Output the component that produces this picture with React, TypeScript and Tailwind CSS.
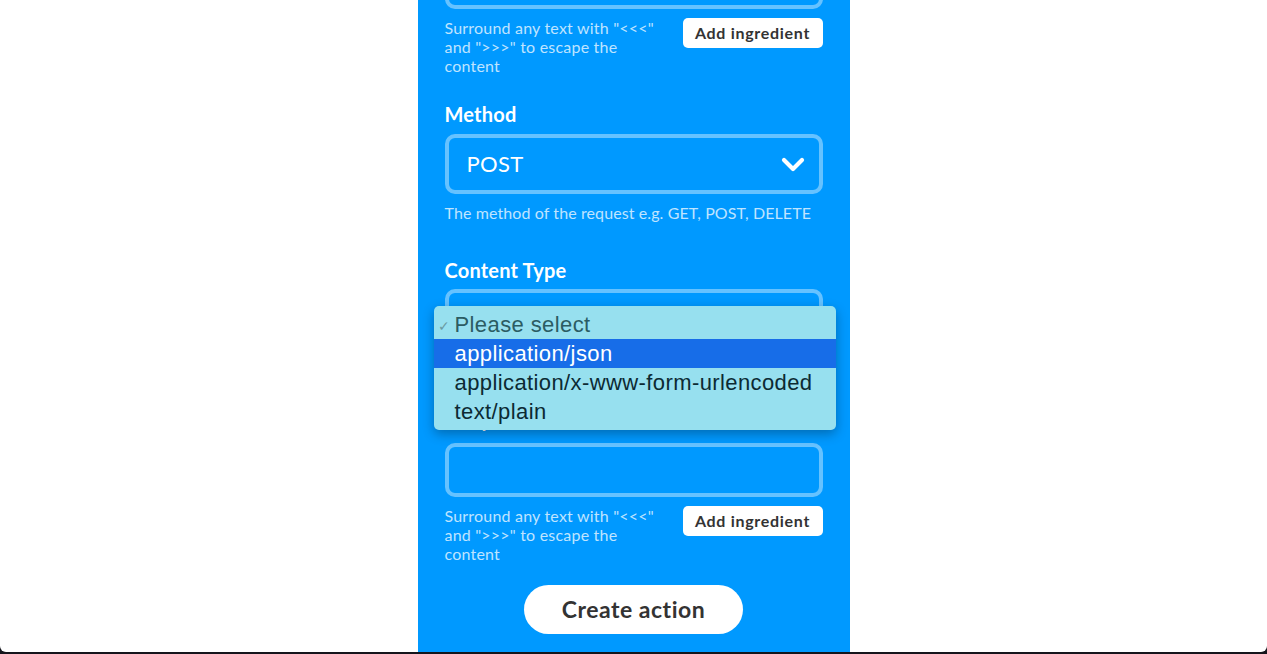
import React from "react";

const font = { fontFamily: "Lato, 'Open Sans', sans-serif" };

function HelperRow() {
  return (
    <div className="mt-[9px] flex items-start justify-between">
      <p className="w-[222px] text-[16px] leading-[19px] tracking-[0.2px] text-white/75">
        Surround any text with "&lt;&lt;&lt;" and "&gt;&gt;&gt;" to escape the content
      </p>
      <button className="h-[30px] w-[140px] rounded-[5px] bg-white text-[16px] font-bold tracking-[0.7px] text-[#333]">
        Add ingredient
      </button>
    </div>
  );
}

function Chevron() {
  return (
    <svg width="24" height="15" viewBox="0 0 24 15" className="shrink-0">
      <polyline points="3,3 12,12 21,3" fill="none" stroke="white" strokeWidth="4.2" strokeLinecap="round" strokeLinejoin="round" />
    </svg>
  );
}

export default function App() {
  return (
    <div className="h-[654px] w-full overflow-hidden bg-[#15151c]" style={font}>
      <div className="flex h-[652px] justify-center overflow-hidden rounded-b-[6px] bg-white">
        <div className="flex w-[432px] flex-col bg-[#0099ff] px-[27px]">
          <div className="-mt-[45px] h-[54px] shrink-0 rounded-[10px] border-4 border-white/40" />
          <HelperRow />

          <label className="mt-[25px] text-[20px] font-bold leading-[28px] tracking-[0.2px] text-white">Method</label>
          <div className="mt-[6px] flex h-[60px] items-center justify-between rounded-[10px] border-4 border-white/40 pl-[18px] pr-[14px]">
            <span className="text-[22px] leading-none tracking-[0.3px] text-white">POST</span>
            <Chevron />
          </div>
          <p className="mt-[9px] text-[16px] leading-[19px] tracking-[0.1px] text-white/75">
            The method of the request e.g. GET, POST, DELETE
          </p>

          <label className="mt-[34px] text-[20px] font-bold leading-[28px] tracking-[0.2px] text-white">Content Type</label>
          <div className="relative mt-[5px]">
            <div className="h-[60px] rounded-[10px] border-4 border-white/40" />
            <div
              className="absolute left-[-11px] top-[17px] z-10 w-[402px] rounded-[5px] bg-[#97e0ef] py-[4px] shadow-[0_4px_12px_rgba(0,0,0,0.3)]"
              style={{ fontFamily: "'Liberation Sans', Arial, sans-serif" }}
            >
              <div className="relative flex h-[29px] items-center pl-[21px] text-[22px] tracking-[0.4px] text-[#2b5c63]">
                <span className="absolute left-[4px] top-[6px] text-[14px] text-[#6a9aa2]">✓</span>
                Please select
              </div>
              <div className="flex h-[29px] items-center bg-[#176de8] pl-[21px] text-[22px] tracking-[0.4px] text-white">application/json</div>
              <div className="flex h-[29px] items-center pl-[21px] text-[22px] tracking-[0.4px] text-[#0c2a33]">application/x-www-form-urlencoded</div>
              <div className="flex h-[29px] items-center pl-[21px] text-[22px] tracking-[0.4px] text-[#0c2a33]">text/plain</div>
            </div>
          </div>

          <label className="mt-[56px] text-[20px] font-bold leading-[28px] text-white">Body</label>
          <div className="mt-[10px] h-[54px] shrink-0 rounded-[10px] border-4 border-white/40" />
          <HelperRow />

          <div className="mt-[22px] flex justify-center">
            <button className="h-[49px] w-[219px] rounded-full bg-white text-[23px] font-bold tracking-[0.5px] text-[#333]">
              Create action
            </button>
          </div>
        </div>
      </div>
    </div>
  );
}
